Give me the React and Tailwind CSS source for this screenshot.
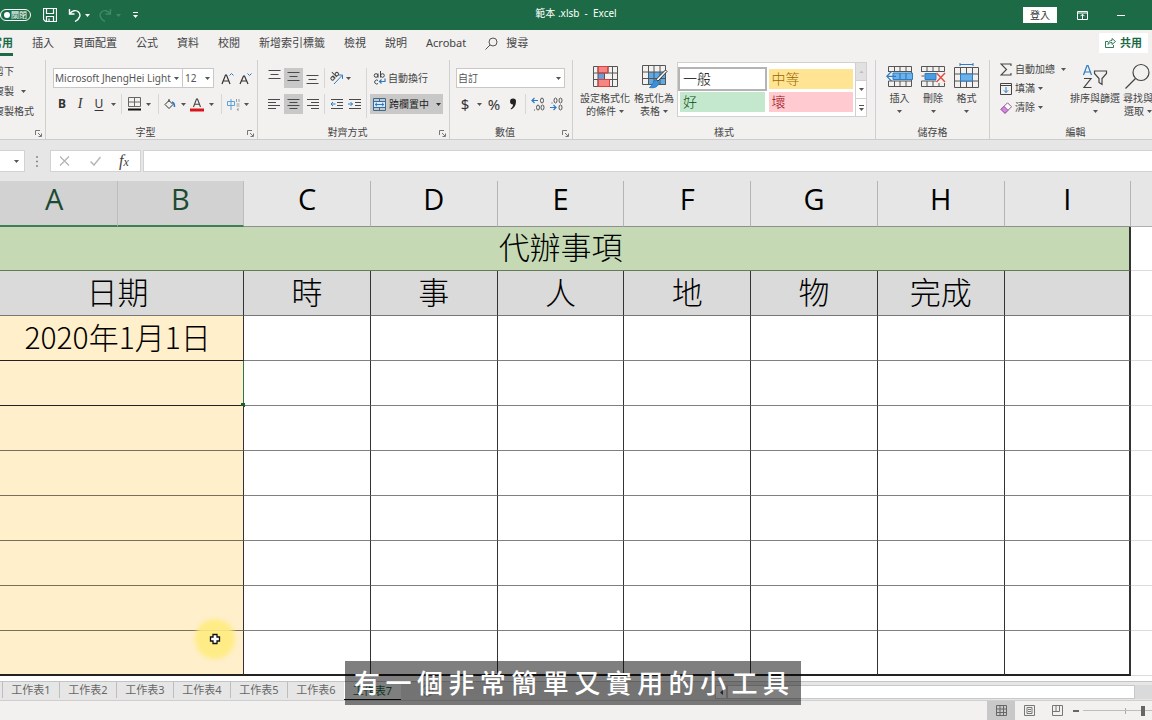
import React from "react";

const cx = (...c) => c.filter(Boolean).join(" ");

function Caret({ className = "text-[#555]" }) {
  return (
    <svg width="5" height="3" viewBox="0 0 5 3" className={cx("shrink-0", className)} aria-hidden="true">
      <path d="M0 0h5L2.500 3z" fill="currentColor" />
    </svg>
  );
}

function Icon({ w = 16, h = 16, box, children, className }) {
  return (
    <svg
      width={w}
      height={h}
      viewBox={box || `0 0 ${w} ${h}`}
      fill="none"
      stroke="#555"
      strokeWidth="1"
      className={cx("shrink-0", className)}
      aria-hidden="true"
    >
      {children}
    </svg>
  );
}

function Tool({ label, className, children }) {
  return (
    <button type="button" aria-label={label} className={cx("flex h-5 shrink-0 items-center justify-center", className)}>
      {children}
    </button>
  );
}

const Sep = ({ className = "mx-1 h-5" }) => <span className={cx("w-px shrink-0 bg-[#d6d6d6]", className)} />;

function Group({ label, launcher, className, bodyClass, children }) {
  return (
    <section className={cx("flex shrink-0 flex-col border-r border-[#cfcfcf]", className)}>
      <div className={cx("flex flex-1", bodyClass)}>{children}</div>
      <div className={cx("relative flex h-3.5 items-center justify-center leading-[14px]", launcher && "pr-3")}>
        <span>{label}</span>
        {launcher && (
          <button type="button" aria-label={launcher} className="absolute right-[3px] top-[5px]">
            <Icon w={7} h={7}>
              <path d="M.5 5V.5H5M3 3l3 3M6.500 3.500v3h-3" stroke="#777" />
            </Icon>
          </button>
        )}
      </div>
    </section>
  );
}

function Picker({ label, value, className, selectClass }) {
  return (
    <div className={cx("relative h-5 border border-[#c8c8c8] bg-white", className)}>
      <select
        aria-label={label}
        defaultValue={value}
        className={cx("block h-full w-full appearance-none bg-transparent text-[#555] outline-none", selectClass)}
      >
        <option>{value}</option>
      </select>
      <span className="pointer-events-none absolute inset-y-0 right-[3px] flex items-center">
        <Caret />
      </span>
    </div>
  );
}

function Lines({ rows }) {
  return (
    <Icon w={13} h={13}>
      {rows.map(([x, y, w]) => (
        <path key={y} d={`M${x} ${y}h${w}`} stroke="#4a4a4a" />
      ))}
    </Icon>
  );
}

function TitleBar() {
  return (
    <header className="flex h-[30px] items-center bg-[#1c6b46] text-[10px] text-white">
      <div className="flex flex-1 items-center">
        <button type="button" className="flex h-3 w-[31px] items-center rounded-full border border-white pl-[3px] text-[8px] leading-none">
          <span className="mr-px size-[6px] shrink-0 rounded-full bg-white" />
          <span className="shrink-0">關閉</span>
        </button>
        <button type="button" aria-label="儲存檔案" className="ml-3">
          <Icon w={14} h={14}>
            <path d="M.5 .5h13v13H2.500l-2-2zM3.500 .5v5h7v-5M3.500 13.500v-5h7v5M6 13.500v-3" stroke="#fff" strokeWidth="1.200" />
          </Icon>
        </button>
        <button type="button" aria-label="復原" className="ml-[11px]">
          <Icon w={14} h={14}>
            <path d="M1.500 1v5h5M1.500 6C4 2.500 8 1.500 10.500 4s2 6.500-3.500 9.500" stroke="#fff" strokeWidth="1.400" />
          </Icon>
        </button>
        <Caret className="ml-[3px] text-white" />
        <button type="button" aria-label="取消復原" className="ml-2">
          <Icon w={14} h={14}>
            <path d="M12.500 1v5h-5M12.500 6C10 2.500 6 1.500 3.500 4s-2 6.500 3.500 9.500" stroke="#3f8a66" strokeWidth="1.400" />
          </Icon>
        </button>
        <Caret className="ml-1 text-[#3f8a66]" />
        <button type="button" aria-label="自訂工具列" className="ml-3">
          <Icon w={5} h={6}>
            <path d="M0 .5h5" stroke="#fff" />
            <path d="M0 3h5L2.500 6z" fill="#fff" stroke="none" />
          </Icon>
        </button>
      </div>
      <h1 className="whitespace-pre pb-1">範本 .xlsb  -  Excel</h1>
      <div className="flex flex-1 items-center justify-end">
        <button type="button" className="h-4 w-[34px] bg-white leading-4 text-[#333]">
          登入
        </button>
        <button type="button" aria-label="功能區顯示選項" className="ml-5">
          <Icon w={11} h={9}>
            <path d="M.5 .5h10v8H.500zM.5 2h10M5.500 8V3.500M3.500 5.200l2-2 2 2" stroke="#fff" />
          </Icon>
        </button>
        <button type="button" aria-label="最小化" className="ml-[29px] mr-[27px] flex h-4 w-2 items-center">
          <span className="h-px w-2 bg-white" />
        </button>
      </div>
    </header>
  );
}

const MENU = ["插入", "頁面配置", "公式", "資料", "校閱", "新增索引標籤", "檢視", "說明", "Acrobat"];

function MenuBar() {
  return (
    <nav className="flex h-[26px] items-center justify-between bg-[#f2f1f0] pr-1 text-[11px] text-[#444]">
      <div className="-ml-[9px] flex h-full items-center gap-[19px]">
        <button type="button" className="flex h-full items-center border-b-[3px] border-[#1c6b46] pt-[3px] font-bold text-[#1c6b46]">
          常用
        </button>
        {MENU.map((m) => (
          <button type="button" key={m} className="shrink-0">
            {m}
          </button>
        ))}
        <button type="button" className="flex items-center gap-2">
          <Icon w={13} h={13}>
            <circle cx="8" cy="5" r="4" />
            <path d="M5 8L.5 12.500" />
          </Icon>
          搜尋
        </button>
      </div>
      <button type="button" className="flex h-5 w-[49px] items-center justify-center gap-1 bg-white font-bold text-[#1c6b46]">
        <Icon w={11} h={10}>
          <path d="M3 3.500H.5v6h8V7M3 6.500c0-3 2-4 4-4V.500l3.500 3L7 6.500v-2c-2 0-3 .5-4 2z" stroke="#1c6b46" strokeWidth=".9" />
        </Icon>
        共用
      </button>
    </nav>
  );
}

function FontGroup() {
  return (
    <Group label="字型" launcher="字型設定" className="w-[212px]" bodyClass="flex-col gap-1.5 pl-[7px] pt-2">
      <div className="flex items-center">
        <Picker label="字型名稱" value="Microsoft JhengHei Light" className="w-[130px]" selectClass="pl-px" />
        <Picker label="字型大小" value="12" className="w-[31px] border-l-0" selectClass="pl-[2px]" />
        <Tool label="放大字型" className="ml-1 w-[18px]">
          <Icon w={13} h={13}>
            <path d="M1 12L4.500 3h1L9 12M2.200 9h5.600" stroke="#333" strokeWidth="1.200" />
            <path d="M8.500 3.500l2-2 2 2" stroke="#2b7cc4" />
          </Icon>
        </Tool>
        <Tool label="縮小字型" className="w-[18px]">
          <Icon w={13} h={13}>
            <path d="M1 12L4.500 4h1L9 12M2.200 9h5.600" stroke="#333" strokeWidth="1.200" />
            <path d="M8.500 1.500l2 2 2-2" stroke="#2b7cc4" />
          </Icon>
        </Tool>
      </div>
      <div className="flex items-center">
        <Tool label="粗體" className="w-[18px] text-xs font-bold text-[#333]">B</Tool>
        <Tool label="斜體" className="w-[18px] font-['Liberation_Serif',serif] text-sm italic text-[#333]">I</Tool>
        <Tool label="底線" className="w-5 text-xs text-[#333] underline underline-offset-2">U</Tool>
        <Tool label="底線樣式" className="w-2"><Caret /></Tool>
        <Sep />
        <Tool label="框線" className="w-4">
          <Icon w={13} h={14}>
            <path d="M.5 .5h12v9H.500zM6.500 .5v9M.5 5h12" stroke="#666" />
            <path d="M0 12.500h13" stroke="#111" strokeWidth="2" />
          </Icon>
        </Tool>
        <Tool label="框線樣式" className="w-3"><Caret /></Tool>
        <Sep />
        <Tool label="填滿色彩" className="w-3.5">
          <Icon w={12} h={12}>
            <path d="M5 1v3M5 2.500L9 6.500 5 10.500 1 6.500z" stroke="#333" />
            <path d="M8 4c2 .5 2.500 2 2.500 5" stroke="#2b7cc4" strokeWidth="1.600" />
          </Icon>
        </Tool>
        <Tool label="填滿色彩選單" className="w-3"><Caret /></Tool>
        <Tool label="字型色彩" className="w-4">
          <Icon w={14} h={15}>
            <path d="M3.500 10L6.500 2h1L10.500 10M4.700 7.200h4.700" stroke="#444" strokeWidth="1.100" />
            <path d="M0 13h14" stroke="#d9151a" strokeWidth="3" />
          </Icon>
        </Tool>
        <Tool label="字型色彩選單" className="w-3"><Caret /></Tool>
        <Sep />
        <Tool label="注音標示" className="w-3.5">
          <Icon w={13} h={13}>
            <path d="M.5 3.500h7v4h-7zM4 1v11" stroke="#5aa3da" />
            <path d="M9.500 1v3M12 1v3M9.500 6h3M9.500 8h3M11.500 10l-1.500 2h2" stroke="#888" strokeWidth=".8" />
          </Icon>
        </Tool>
        <Tool label="注音標示選單" className="w-3"><Caret /></Tool>
      </div>
    </Group>
  );
}

const V = {
  vertical: [[0.5, 2.5, 12], [2.5, 6.5, 8], [0.5, 10.5, 12]],
  left: [[0, 1.5, 12], [0, 4.5, 8], [0, 7.5, 12], [0, 10.5, 8]],
  center: [[0.5, 1.5, 12], [2.5, 4.5, 8], [0.5, 7.5, 12], [2.5, 10.5, 8]],
  right: [[1, 1.5, 12], [5, 4.5, 8], [1, 7.5, 12], [5, 10.5, 8]],
};

function AlignGroup() {
  return (
    <Group label="對齊方式" launcher="對齊設定" className="w-[192px]" bodyClass="pl-[7px] pt-2">
      <div className="flex flex-col gap-1.5">
        <div className="flex items-center">
          <Tool label="靠上對齊" className="w-[19px] pb-2"><Lines rows={V.vertical} /></Tool>
          <Tool label="置中對齊" className="w-[19px] bg-[#c8c8c8] pb-1"><Lines rows={V.vertical} /></Tool>
          <Tool label="靠下對齊" className="w-[19px] pt-0.5"><Lines rows={V.vertical} /></Tool>
          <Sep className="mx-0.5 h-5" />
          <Tool label="方向" className="w-[18px]">
            <Icon w={15} h={14}>
              <path d="M5 13L13 4.500M9.500 4h4v4" stroke="#2b7cc4" />
              <g transform="rotate(-45 5 6)" stroke="#444">
                <circle cx="3" cy="6" r="1.700" />
                <path d="M5 4v4M7 1v7" />
                <circle cx="9" cy="6" r="1.700" />
              </g>
            </Icon>
          </Tool>
          <Tool label="方向選單" className="w-1.5"><Caret /></Tool>
        </div>
        <div className="flex items-center">
          <Tool label="靠左" className="w-[19px]"><Lines rows={V.left} /></Tool>
          <Tool label="置中" className="w-[19px] bg-[#c8c8c8]"><Lines rows={V.center} /></Tool>
          <Tool label="靠右" className="w-[19px]"><Lines rows={V.right} /></Tool>
          <Sep className="mx-0.5 h-5" />
          <Tool label="減少縮排" className="w-[18px]">
            <Icon w={13} h={12}>
              <path d="M1 1.500h12M7 4.500h6M7 7.500h6M1 10.500h12" stroke="#4a4a4a" />
              <path d="M5.500 6H1M3 4L1 6l2 2" stroke="#2b7cc4" />
            </Icon>
          </Tool>
          <Tool label="增加縮排" className="w-[18px]">
            <Icon w={13} h={12}>
              <path d="M1 1.500h12M7 4.500h6M7 7.500h6M1 10.500h12" stroke="#4a4a4a" />
              <path d="M0 6h4.500M2.500 4l2 2-2 2" stroke="#2b7cc4" />
            </Icon>
          </Tool>
        </div>
      </div>
      <Sep className="mx-[3px] h-[50px]" />
      <div className="flex flex-col items-start gap-1.5">
        <button type="button" className="flex h-5 items-center gap-0.5 pl-[3px]">
          <Icon w={13} h={14}>
            <circle cx="3" cy="4.500" r="1.800" stroke="#444" />
            <path d="M5 2.500v4.200M7.500 0v6.500M5 9.500a2 2 0 1 0 0 3" stroke="#444" />
            <circle cx="9.500" cy="4.500" r="1.800" stroke="#444" />
            <path d="M12 7.500v3H6.500M8.500 8.500l-2 2 2 2" stroke="#2b7cc4" strokeWidth="1.200" />
          </Icon>
          自動換行
        </button>
        <button type="button" className="flex h-5 w-[73px] items-center gap-[3px] bg-[#c8c8c8] pl-[3px] text-[#222]">
          <Icon w={13} h={13}>
            <path d="M1 4h11v5H1z" fill="#d7ebfa" stroke="none" />
            <path d="M.5 .5h12v12H.500zM.5 3.500h12M.5 9.500h12M6.500 .5v3M6.500 9.500v3" stroke="#3c6b93" />
            <path d="M2 6.500h9M4 4.800L2.200 6.500 4 8.200M9 4.800l1.800 1.700L9 8.200" stroke="#2b7cc4" />
          </Icon>
          跨欄置中
          <span className="pl-1"><Caret className="text-[#333]" /></span>
        </button>
      </div>
    </Group>
  );
}

function NumberGroup() {
  return (
    <Group label="數值" launcher="數值設定" className="w-[123px]" bodyClass="flex-col gap-1.5 pl-1.5 pt-2">
      <Picker label="數值格式" value="自訂" className="w-[109px]" selectClass="pl-px" />
      <div className="flex items-center text-[#333]">
        <Tool label="會計格式" className="w-[18px] text-[15px]">$</Tool>
        <Tool label="會計格式選單" className="w-2.5"><Caret /></Tool>
        <Tool label="百分比" className="w-5 text-[15px]">%</Tool>
        <Tool label="千分位" className="w-[18px]">
          <Icon w={8} h={12}>
            <path d="M4 .5a3 3 0 0 1 3 3.200C7 7.500 5 10 2 11.500l-.4-.8C3.200 9.500 4 8.200 4.100 6.500A3 3 0 1 1 4 .5z" fill="#222" stroke="none" />
          </Icon>
        </Tool>
        <Sep className="mx-[3px] h-5" />
        <Tool label="增加小數位數" className="w-[18px]">
          <Icon w={14} h={14}>
            <path d="M7 3.500H1M3.500 1L1 3.500 3.500 6" stroke="#2b7cc4" strokeWidth="1.200" />
            <ellipse cx="11" cy="3.500" rx="1.500" ry="2.500" />
            <ellipse cx="7" cy="10.500" rx="1.500" ry="2.500" />
            <ellipse cx="11.500" cy="10.500" rx="1.500" ry="2.500" />
            <path d="M3.500 12.500v1" />
          </Icon>
        </Tool>
        <Tool label="減少小數位數" className="w-[18px]">
          <Icon w={14} h={14}>
            <path d="M1 10.500h6M4.500 8L7 10.500 4.500 13" stroke="#2b7cc4" strokeWidth="1.200" />
            <ellipse cx="6.500" cy="3.500" rx="1.500" ry="2.500" />
            <ellipse cx="11.500" cy="3.500" rx="1.500" ry="2.500" />
            <ellipse cx="11.500" cy="10.500" rx="1.500" ry="2.500" />
            <path d="M3 5.500v1" />
          </Icon>
        </Tool>
      </div>
    </Group>
  );
}

function BigButton({ icon, lines, className }) {
  return (
    <button type="button" className={cx("flex shrink-0 flex-col items-center whitespace-nowrap leading-[13px]", className)}>
      <span className="flex h-7 items-center">{icon}</span>
      <span className="mt-0.5">{lines[0]}</span>
      <span className="flex h-[13px] items-center gap-[3px]">
        {lines[1]}
        <Caret />
      </span>
    </button>
  );
}

const STYLES = [
  { name: "一般", look: "border-2 border-[#b4b4b4] bg-white text-black h-6 pl-[3px]" },
  { name: "中等", look: "mx-0.5 h-5 bg-[#ffe593] text-[#9c6500] pl-[3px]" },
  { name: "好", look: "mx-0.5 h-5 bg-[#c3e8cd] text-[#0b4a12] pl-[3px]" },
  { name: "壞", look: "mx-0.5 h-5 bg-[#ffcbd0] text-[#9c0a12] pl-[3px]" },
];

function StylesGroup() {
  return (
    <Group label="樣式" className="w-[303px]" bodyClass="pl-[7px] pt-0.5">
      <BigButton
        className="w-[50px]"
        lines={["設定格式化", "的條件"]}
        icon={
          <Icon w={25} h={21}>
            <path d="M5 1h10v6H5zM5 13h12v7H5z" fill="#f48684" stroke="none" />
            <path d="M5 7h6v6H5z" fill="#6f9ad8" stroke="none" />
            <path d="M.5 .5h24v20H.500zM.5 7h24M.5 13.500h24M5 .5v20M15 .5v6.500M19.500 .5v20M11.500 7v6.500M16.500 13.500v7" stroke="#555" />
            <path d="M5 .5h10V7H5zM5 13.500h11.500v7H5z" stroke="#d9403e" />
          </Icon>
        }
      />
      <BigButton
        className="ml-1 w-10"
        lines={["格式化為", "表格"]}
        icon={
          <Icon w={27} h={25}>
            <path d="M7 8h18v13H7z" fill="#5fa9e4" stroke="none" />
            <path d="M1.500 1.500h23v19h-23zM1.500 8h23M1.500 14.500h23M7.500 1.500v19M13 1.500v19M19 1.500v19" stroke="#555" />
            <path d="M26 7.500L17 17l-2-1.500L24.500 6z" fill="#fff" stroke="#333" />
            <path d="M15 16l3 2.500c-.5 4-4.500 6-9.500 5 3-1.500 3-6 6.500-7.500z" fill="#3d8fd6" stroke="#2b7cc4" />
          </Icon>
        }
      />
      <div className="ml-[3px] flex h-[55px] w-[190px] border border-[#d0d0d0] bg-white">
        <div className="grid flex-1 grid-cols-2 content-center items-center gap-y-px">
          {STYLES.map((s) => (
            <button type="button" key={s.name} className={cx("flex items-center text-sm font-light leading-5", s.look)}>
              {s.name}
            </button>
          ))}
        </div>
        <div className="flex w-[11px] flex-col divide-y divide-[#d0d0d0] border-l border-[#d0d0d0]">
          <button type="button" aria-label="上一列" className="flex flex-1 items-center justify-center bg-[#e1e1e1]">
            <Icon w={5} h={3}><path d="M.5 3h4L2.500 .5z" fill="#bbb" stroke="none" /></Icon>
          </button>
          <button type="button" aria-label="下一列" className="flex flex-1 items-center justify-center"><Caret /></button>
          <button type="button" aria-label="其他樣式" className="flex flex-1 items-center justify-center">
            <Icon w={5} h={6}>
              <path d="M0 .5h5" />
              <path d="M0 3h5L2.500 6z" fill="#555" stroke="none" />
            </Icon>
          </button>
        </div>
      </div>
    </Group>
  );
}

function CellsGroup() {
  return (
    <Group label="儲存格" className="w-[114px]" bodyClass="pl-[7px] pt-0.5">
      <BigButton
        className="w-[33px]"
        lines={["插入", ""]}
        icon={
          <Icon w={27} h={21}>
            <path d="M2.500 6V.5h23v20h-23V15M2.500 5.500h23M2.500 15h23M8.500 .5v5M14 .5v5M20 .5v5M8.500 15v5.500M14 15v5.500M20 15v5.500" />
            <path d="M7 7h19.500v6.500H7z" fill="#6cb2ea" stroke="#2b7cc4" />
            <path d="M14 7v6.500M20 7v6.500M.8 10.300H10M5.500 5.500L.8 10.300l4.700 4.700" stroke="#2b7cc4" strokeWidth="1.200" />
          </Icon>
        }
      />
      <BigButton
        className="w-[34px]"
        lines={["刪除", ""]}
        icon={
          <Icon w={26} h={21}>
            <path d="M1.500 6V.5h23v5M1.500 15v5.500h23V17M1.500 5.500h23M1.500 15H16M7 .5v5M13 .5v5M19 .5v5M7 15v5.500M13 15v5.500M19 17v3.500M1.500 10h3" />
            <path d="M5 7.500h11v6H5z" fill="#4a9be0" stroke="#2b7cc4" />
            <path d="M16.500 7l8.500 9M25 7l-8.500 9" stroke="#e04a3f" strokeWidth="1.400" />
          </Icon>
        }
      />
      <BigButton
        className="w-[33px]"
        lines={["格式", ""]}
        icon={
          <Icon w={25} h={26}>
            <path d="M6 1.500h13M6 0v3M19 0v3" stroke="#2b7cc4" />
            <path d="M.5 4.500h24v20H.500zM.5 11h24M.5 18h24M6.500 4.500v20M18.500 4.500v20M12.500 4.500V11M12.500 18v6.500" />
            <path d="M6.500 11h12v7h-12z" fill="#6cb2ea" stroke="#2b7cc4" />
          </Icon>
        }
      />
    </Group>
  );
}

function EditGroup() {
  return (
    <Group label="編輯" className="w-[172px]" bodyClass="pl-2.5">
      <div className="flex w-[70px] flex-col text-[10px]">
        <button type="button" className="flex h-[19px] items-center gap-[3px] whitespace-nowrap">
          <Icon w={12} h={13}>
            <path d="M11 3V1H1l5.500 5.500L1 12h10v-2" stroke="#444" strokeWidth="1.100" />
          </Icon>
          自動加總
          <span className="pl-[3px]"><Caret /></span>
        </button>
        <button type="button" className="flex h-[19px] items-center gap-[3px]">
          <Icon w={12} h={12}>
            <path d="M.5 .5h11v11H.500zM.5 2.500h11" stroke="#444" />
            <path d="M6 4v5.500M3.800 7.300L6 9.500l2.200-2.200" stroke="#2b7cc4" />
          </Icon>
          填滿
          <Caret />
        </button>
        <button type="button" className="flex h-[19px] items-center gap-[3px]">
          <Icon w={12} h={12}>
            <path d="M7.500 .8l4 4-6.500 6.500-4-4z" fill="#fff" stroke="#8a5a90" />
            <path d="M4 4.300l4 4-3 3-4-4z" fill="#d08ad6" stroke="#a64fb0" />
          </Icon>
          清除
          <Caret />
        </button>
      </div>
      <BigButton
        className="mt-0.5 w-[50px]"
        lines={["排序與篩選", ""]}
        icon={
          <Icon w={26} h={25}>
            <path d="M1.500 11L5 1.500h1L9.500 11M2.700 8h5.600" stroke="#2b7cc4" strokeWidth="1.200" />
            <path d="M2 14.500h7L2 23.500h7.500" stroke="#444" strokeWidth="1.200" />
            <path d="M12.500 7h12v2.500l-4.500 5v6l-3-2v-4l-4.500-5z" stroke="#444" strokeWidth="1.200" />
          </Icon>
        }
      />
      <BigButton
        className="mt-0.5 w-9"
        lines={["尋找與", "選取"]}
        icon={
          <Icon w={28} h={27}>
            <circle cx="17" cy="9.500" r="8" stroke="#444" strokeWidth="1.200" />
            <path d="M11.500 15.500L1.500 25.500" stroke="#444" strokeWidth="1.200" />
          </Icon>
        }
      />
    </Group>
  );
}

function Ribbon() {
  return (
    <div className="flex h-[84px] overflow-hidden border-b border-[#cccccb] bg-[#f2f1f0] pt-1 text-[10px] text-[#444]">
      <Group label="" launcher="剪貼簿設定" className="w-[46px]" bodyClass="-ml-1.5 flex-col pt-px">
        <button type="button" className="flex h-5 items-center whitespace-nowrap">剪下</button>
        <button type="button" className="flex h-5 items-center gap-[7px] whitespace-nowrap">
          複製 <Caret />
        </button>
        <button type="button" className="flex h-5 items-center whitespace-nowrap">複製格式</button>
      </Group>
      <FontGroup />
      <AlignGroup />
      <NumberGroup />
      <StylesGroup />
      <CellsGroup />
      <EditGroup />
    </div>
  );
}

function FormulaBar() {
  return (
    <div className="flex h-[41px] items-start bg-[#e6e6e6] pt-2.5">
      <div className="relative h-[22px] w-[25px] border border-l-0 border-[#d2d2d2] bg-white">
        <input aria-label="名稱方塊" className="h-full w-full bg-transparent outline-none" />
        <span className="pointer-events-none absolute inset-y-0 right-[5px] flex items-center"><Caret /></span>
      </div>
      <Icon w={2} h={11} className="ml-[11px] mt-1.5">
        <path d="M0 1h2M0 5.500h2M0 10h2" stroke="#888" strokeWidth="1.500" />
      </Icon>
      <div className="ml-3 flex h-[22px] w-[91px] items-center border border-[#d2d2d2] bg-white">
        <button type="button" aria-label="取消" className="ml-2">
          <Icon w={11} h={10}><path d="M1 .5l9 9M10 .5l-9 9" stroke="#b5b5b5" strokeWidth="1.300" /></Icon>
        </button>
        <button type="button" aria-label="輸入" className="ml-5">
          <Icon w={11} h={10}><path d="M.5 5.500l3.500 3.500L10.500 1" stroke="#b5b5b5" strokeWidth="1.500" /></Icon>
        </button>
        <button type="button" className="ml-[18px] font-['Liberation_Serif',serif] text-base italic leading-5 text-[#444]">
          f<span className="text-xs">x</span>
        </button>
      </div>
      <input aria-label="資料編輯列" className="ml-0.5 h-[22px] min-w-0 flex-1 border border-r-0 border-[#d2d2d2] bg-white px-1 text-[11px] outline-none" />
    </div>
  );
}

const COLS = ["A", "B", "C", "D", "E", "F", "G", "H", "I"];
const HEADS = ["時", "事", "人", "地", "物", "完成", ""];
const ROWS = ["2020年1月1日", "", "", "", "", "", "", ""];

function Sheet() {
  return (
    <main className="relative flex-1 overflow-hidden bg-white">
      <table className="w-full table-fixed border-separate border-spacing-0 text-center text-black">
        <colgroup>
          <col className="w-[10.2%]" />
          {COLS.slice(1).map((c) => (
            <col key={c} className="w-[11%]" />
          ))}
          <col />
        </colgroup>
        <thead>
          <tr className="h-[46px] bg-[#e6e6e6] font-['Open_Sans',sans-serif] text-[29px] leading-none">
            {COLS.map((c, i) => (
              <th
                key={c}
                scope="col"
                className={cx(
                  "border-r p-0 pb-2.5 font-normal",
                  i < 2 ? "border-b-2 border-r-[#bdbdbd] border-b-[#3f7d57] bg-[#d2d2d2] text-[#1d4a33]" : "border-b border-r-[#b4b4b4] border-b-[#8f8f8f]",
                  i === 0 && "pr-2"
                )}
              >
                {c}
              </th>
            ))}
            <th className="border-b border-[#b0b0b0] p-0" />
          </tr>
        </thead>
        <tbody className="font-['Noto_Sans_CJK_TC',sans-serif] text-[31px] font-light leading-[38px]">
          <tr className="h-11">
            <td colSpan={9} className="border-b border-r-2 border-b-[#667a5a] border-r-[#333] bg-[#c5dab4] p-0 pb-[5px] pr-2">
              代辦事項
            </td>
            <td className="border-b border-[#dcdcdc] p-0" />
          </tr>
          <tr className="h-[45px] bg-[#dadada]">
            <td colSpan={2} className="border-b border-r border-b-[#777] border-r-[#333] p-0 pb-[5px] pr-2">
              日期
            </td>
            {HEADS.map((h, i) => (
              <td key={i} className={cx("border-b border-b-[#777] border-r-[#333] p-0 pb-[5px]", i === 6 ? "border-r-2" : "border-r")}>
                {h}
              </td>
            ))}
            <td className="border-b border-[#dcdcdc] bg-white p-0" />
          </tr>
          {ROWS.map((date, r) => (
            <tr key={r} className="h-[45px]">
              <td
                colSpan={2}
                className={cx(
                  "relative border-r bg-[#ffefca] p-0 pb-[5px] pr-2 text-[30px]",
                  r === 1 ? "border-r-[#2f7350]" : "border-r-[#333]",
                  r === 7 ? "border-b-2 border-b-[#222]" : "border-b",
                  r < 2 && "border-b-[#222]",
                  r > 1 && r < 7 && "border-b-[#77705f]"
                )}
              >
                {date}
                {r === 1 && <span className="absolute -bottom-0.5 -right-0.5 size-1 bg-[#1c5c3a]" />}
              </td>
              {HEADS.map((_, i) => (
                <td
                  key={i}
                  className={cx(
                    "border-r-[#333] p-0",
                    i === 6 ? "border-r-2" : "border-r",
                    r === 7 ? "border-b-2 border-b-[#222]" : "border-b border-b-[#808080]"
                  )}
                />
              ))}
              <td className="border-b border-[#dcdcdc] p-0" />
            </tr>
          ))}
        </tbody>
      </table>
      <div className="pointer-events-none absolute left-[195px] top-[438px] flex size-10 items-center justify-center">
        <span className="absolute inset-0 rounded-full bg-[#ffec80] opacity-90 blur-[2px]" />
        <Icon w={12} h={12} className="relative">
          <path d="M4 1.500h4V4h2.500v4H8v2.500H4V8H1.500V4H4z" fill="#fff" stroke="#111" strokeWidth="1.300" />
        </Icon>
      </div>
    </main>
  );
}

function SheetTabs() {
  return (
    <div className="flex h-5 items-start border-b border-t border-b-[#cfcfcf] border-t-[#c4c4c4] bg-[#e6e6e6] pl-0.5 text-[11px] text-[#666]">
      {[1, 2, 3, 4, 5, 6].map((n) => (
        <button type="button" key={n} className="h-4 w-[57px] shrink-0 border-l border-[#bdbdbd] leading-[14px]">
          工作表{n}
        </button>
      ))}
      <button type="button" className="h-[18px] w-[57px] shrink-0 border-b border-[#111] bg-white leading-[14px] text-[#1c6b46]">工作表7</button>
      <button type="button" aria-label="新增工作表" className="ml-5 mt-0.5">
        <Icon w={13} h={13}>
          <circle cx="6.500" cy="6.500" r="5.500" stroke="#888" />
          <path d="M6.500 4v5M4 6.500h5" stroke="#888" />
        </Icon>
      </button>
      <div className="ml-auto mt-[3px] flex h-3.5 w-[38%] items-center bg-[#dadada] pr-[17px]">
        <button type="button" aria-label="向左捲動" className="flex h-full w-3 items-center justify-center border border-[#c8c8c8] bg-white">
          <Icon w={3} h={5}><path d="M3 0v5L0 2.500z" fill="#444" stroke="none" /></Icon>
        </button>
        <span className="h-full flex-1 border border-[#c8c8c8] bg-white" />
      </div>
    </div>
  );
}

function StatusBar() {
  return (
    <footer className="flex h-[19px] items-center justify-end overflow-hidden bg-[#f2f1f0]">
      <button type="button" aria-label="標準模式" className="flex h-full w-7 shrink-0 items-center justify-center bg-[#c8c8c8]">
        <Icon w={11} h={11}><path d="M.5 .5h10v10H.500zM.5 4h10M.5 7.500h10M4 .5v10M7.500 .5v10" stroke="#666" /></Icon>
      </button>
      <button type="button" aria-label="整頁模式" className="flex h-full w-7 shrink-0 items-center justify-center">
        <Icon w={11} h={11}><path d="M.5 .5h10v10H.500zM3 2.500h5v6H3zM4 4.500h3M4 6.500h3" stroke="#777" /></Icon>
      </button>
      <button type="button" aria-label="分頁預覽" className="flex h-full w-7 shrink-0 items-center justify-center">
        <Icon w={11} h={11}><path d="M.5 .5h10v10H.500zM4 .5v6M7.500 .5v6M.5 6.500h7" stroke="#777" /></Icon>
      </button>
      <button type="button" aria-label="縮小" className="ml-0.5 mr-1 flex h-full w-1.5 shrink-0 items-center">
        <span className="h-0.5 w-1.5 bg-[#666]" />
      </button>
      <div className="relative -mr-[15px] flex h-full w-[84px] shrink-0 items-center">
        <span className="absolute left-1/2 h-1.5 w-px bg-[#aaa]" />
        <input
          type="range"
          aria-label="顯示比例"
          defaultValue="72"
          className="relative h-px w-full appearance-none bg-[#bdbdbd] [&::-webkit-slider-thumb]:h-2.5 [&::-webkit-slider-thumb]:w-1 [&::-webkit-slider-thumb]:appearance-none [&::-webkit-slider-thumb]:bg-[#666]"
        />
      </div>
    </footer>
  );
}

export default function App() {
  return (
    <div
      lang="zh-Hant"
      className="relative flex min-h-screen flex-col overflow-hidden bg-[#e6e6e6] font-['Noto_Sans','Noto_Sans_CJK_TC',sans-serif]"
    >
      <TitleBar />
      <MenuBar />
      <Ribbon />
      <FormulaBar />
      <Sheet />
      <SheetTabs />
      <StatusBar />
      <div className="pointer-events-none absolute inset-x-0 bottom-[15px] flex justify-center pr-1.5">
        <p className="h-11 w-[456px] bg-black/50 pl-[9px] pr-3 text-[26px] font-medium leading-[44px] text-white [text-align-last:justify]">
          有一個非常簡單又實用的小工具
        </p>
      </div>
    </div>
  );
}
